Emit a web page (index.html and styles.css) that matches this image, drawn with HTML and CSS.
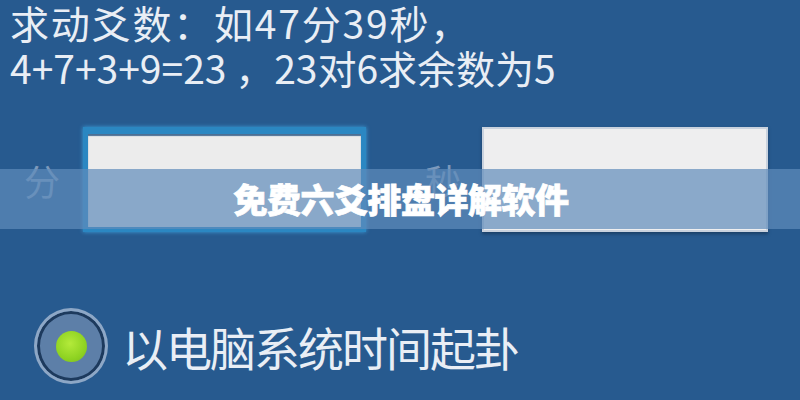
FILE: index.html
```html
<!DOCTYPE html>
<html lang="zh-CN">
<head>
<meta charset="utf-8">
<link rel="stylesheet" href="styles.css">
</head>
<body>
<div class="screen">
  <div class="prompt">
    <div class="line l1">求动爻数：如47分39秒，</div>
    <div class="line l2">4+7+3+9=23 ，23对6求余数为5</div>
  </div>
  <div class="inputs">
    <span class="label lab-min">分</span>
    <div class="box box-min"></div>
    <span class="label lab-sec">秒</span>
    <div class="box box-sec"></div>
  </div>
  <div class="radio-row">
    <span class="radio"><span class="dot"></span></span>
    <span class="radio-text">以电脑系统时间起卦</span>
  </div>
  <div class="band"><span class="title">免费六爻排盘详解软件</span></div>
</div>
</body>
</html>
```
FILE: styles.css
```css
html, body {
  margin: 0;
  padding: 0;
}
body {
  background: #275a8f;
  font-family: "Noto Sans CJK SC", "Noto Sans", sans-serif;
}
.screen {
  position: relative;
  width: 800px;
  height: 400px;
  overflow: hidden;
  background: #275a8f;
}
.prompt {
  padding: 2px 0 0 10px;
  color: #e9eef5;
}
.line {
  font-size: 39px;
  line-height: 45px;
  white-space: nowrap;
}
.l1 {
  letter-spacing: 1.8px;
  margin-top: -2px;
}
.inputs {
  display: flex;
  align-items: center;
  margin-top: 37px;
  height: 105px;
}
.label {
  font-size: 36px;
  color: #7d99bb;
  line-height: 1;
}
.lab-min {
  margin-left: 24px;
  width: 59px;
}
.lab-sec {
  margin-left: 59px;
  width: 57px;
}
.box {
  box-sizing: border-box;
  height: 105px;
  background: #ececec;
}
.box-min {
  width: 283px;
  border: 5px solid #2b87c2;
  border-top-width: 7px;
  box-shadow: 0 0 4px #3c9fdc, inset 0 2px 1px #4c6f94;
}
.box-sec {
  width: 286px;
  border: 2px solid #c9d2de;
  background: #eeeeef;
  box-shadow: 0 2px 3px #1b3f66;
}
.radio-row {
  display: flex;
  align-items: center;
  margin-top: 76px;
  padding-left: 34px;
}
.radio {
  box-sizing: border-box;
  width: 74px;
  height: 76px;
  border-radius: 50%;
  border: 3px solid #8da7c6;
  box-shadow: inset 0 0 0 3px #1d3a5d;
  background: #5d7fa8;
  display: flex;
  align-items: center;
  justify-content: center;
}
.dot {
  width: 31px;
  height: 31px;
  border-radius: 50%;
  background: radial-gradient(circle at 45% 40%, #b4ea3a 0%, #8fd322 60%, #78b91c 100%);
}
.radio-text {
  margin-left: 14px;
  font-size: 46px;
  line-height: 1;
  color: #e9eef5;
  letter-spacing: -2px;
  white-space: nowrap;
}
.band {
  position: absolute;
  left: 0;
  top: 169px;
  width: 800px;
  height: 60px;
  background: rgba(96, 140, 186, 0.7);
  display: flex;
  align-items: center;
  justify-content: center;
}
.title {
  font-size: 34px;
  font-weight: 900;
  color: #ffffff;
  -webkit-text-stroke: 0.7px #ffffff;
  letter-spacing: -0.5px;
  line-height: 1;
  margin-left: 2px;
}
```
